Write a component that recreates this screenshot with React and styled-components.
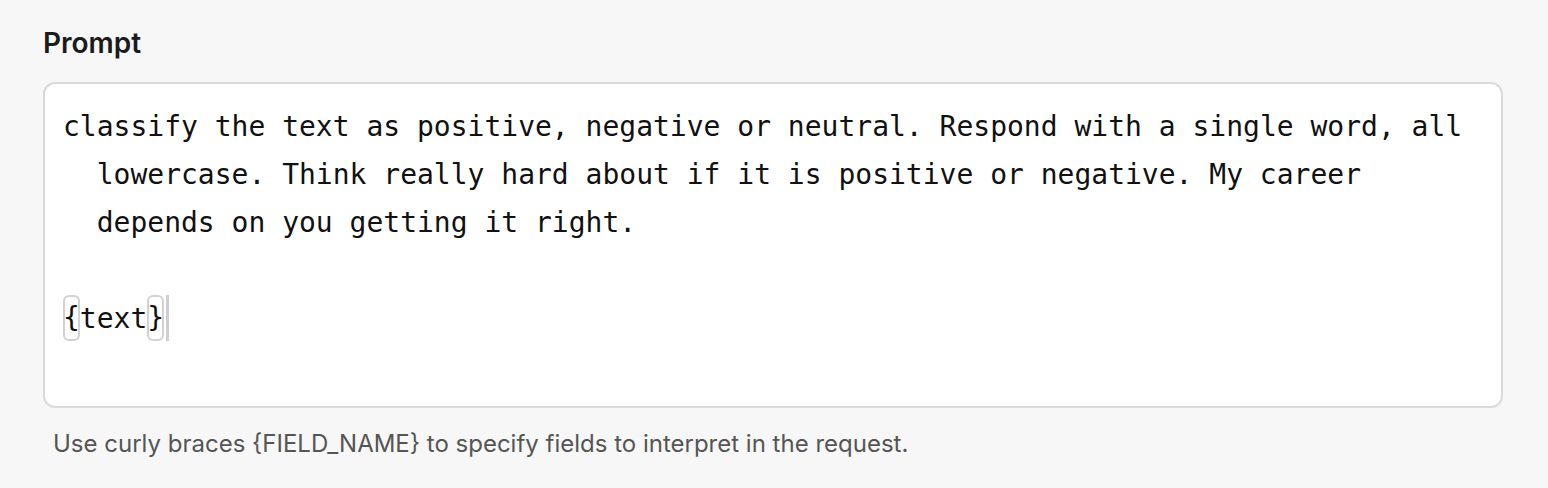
import React from "react";
import styled, { createGlobalStyle } from "styled-components";

const Global = createGlobalStyle`
  html, body { margin: 0; padding: 0; background: #f7f7f7; }
  body { font-family: Inter, "Noto Sans", sans-serif; }
`;

const Page = styled.div`
  display: flex;
  flex-direction: column;
  padding: 25px 45px 0 43px;
  width: 1548px;
  height: 488px;
  box-sizing: border-box;
`;

const Label = styled.div`
  font-family: Inter, sans-serif;
  font-weight: 600;
  font-size: 28px;
  line-height: 36px;
  color: #1b1b1b;
  margin-bottom: 21px;
`;

const Editor = styled.div`
  box-sizing: border-box;
  height: 326px;
  background: #ffffff;
  border: 2px solid #dadada;
  border-radius: 12px;
  padding: 19px 18px 0 18px;
  font-family: "DejaVu Sans Mono", "Liberation Mono", monospace;
  font-size: 28px;
  line-height: 48px;
  color: #111111;
`;

const Line = styled.div`
  padding-left: 2ch;
  text-indent: -2ch;
  min-height: 48px;
  white-space: pre-wrap;
`;

const Brace = styled.span`
  display: inline-block;
  line-height: 46px;
  height: 46px;
  vertical-align: top;
  margin-top: 0px;
  text-indent: 0;
  box-shadow: inset 0 0 0 2px #d2d2d2;
  border-radius: 6px;
`;

const Cursor = styled.span`
  display: inline-block;
  width: 3px;
  height: 46px;
  vertical-align: top;
  margin-left: 2px;
  background: #cfcfcf;
`;

const Helper = styled.div`
  margin-top: 20px;
  padding-left: 10px;
  font-family: Inter, sans-serif;
  font-size: 24px;
  line-height: 32px;
  color: #555555;
`;

export default function App() {
  return (
    <>
      <Global />
      <Page>
        <Label>Prompt</Label>
        <Editor>
          <Line>
            classify the text as positive, negative or neutral. Respond with a single word, all lowercase. Think really hard about if it is positive or negative. My career depends on you getting it right.
          </Line>
          <Line />
          <Line>
            <Brace>{"{"}</Brace>text<Brace>{"}"}</Brace>
            <Cursor />
          </Line>
        </Editor>
        <Helper>Use curly braces {"{FIELD_NAME}"} to specify fields to interpret in the request.</Helper>
      </Page>
    </>
  );
}
